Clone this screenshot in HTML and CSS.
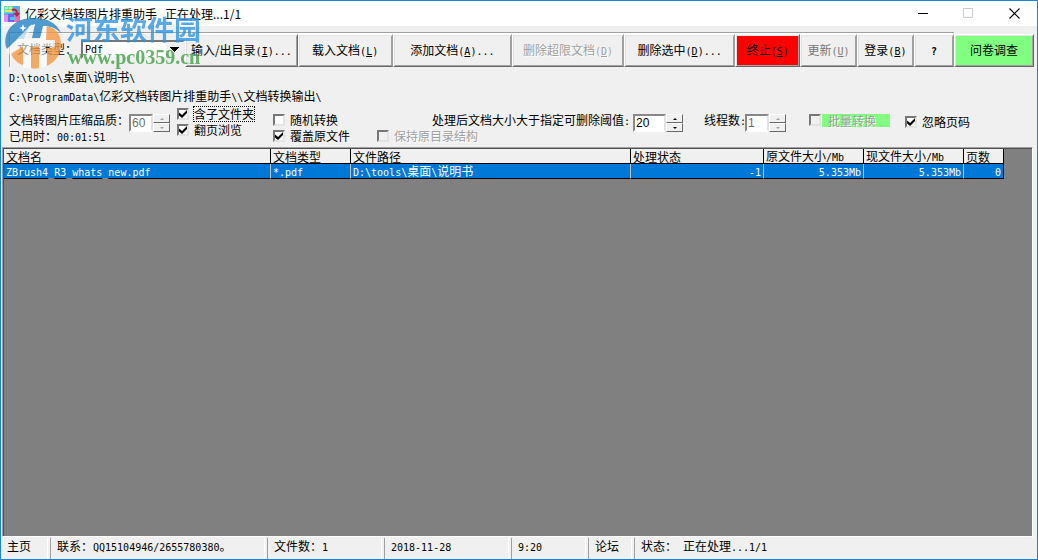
FILE: index.html
```html
<!DOCTYPE html>
<html lang="zh-CN">
<head>
<meta charset="utf-8">
<title>亿彩文档转图片排重助手</title>
<link rel="stylesheet" href="styles.css">
</head>
<body>
<div class="window">
  <header class="titlebar">
    <svg class="app-icon" width="16" height="16" viewBox="0 0 16 16" aria-hidden="true">
      <rect width="16" height="16" fill="#4fb4f5"/>
      <rect width="9" height="7" fill="#5fe0c0"/>
      <path d="M1 1h3v2H1zM5 1h3v2H5zM1 4h7v2H1z" fill="#f5e64a"/>
      <rect y="9" width="5" height="7" fill="#e58af5"/>
      <rect x="4" y="8" width="6" height="8" fill="#7b5cf0"/>
      <rect x="10" y="10" width="6" height="6" fill="#f56ab4"/>
      <rect x="6" y="11" width="5" height="3" fill="#37d0f0"/>
      <path d="M8 4q5-2 5 4" fill="none" stroke="#e01030" stroke-width="2"/>
      <path d="M9 7h7l-3 4z" fill="#e01030"/>
    </svg>
    <h1 class="title"><span>亿彩文档转图片排重助手</span><span>正在处理...1/1</span></h1>
    <div class="controls">
      <button type="button" aria-label="最小化"><svg width="11" height="11"><path d="M0 5.500h10" stroke="#000"/></svg></button>
      <button type="button" aria-label="最大化" disabled><svg width="11" height="11"><path d="M.5.500h9v9h-9z" fill="none" stroke="#ccc"/></svg></button>
      <button type="button" aria-label="关闭"><svg width="11" height="11"><path d="M.5.500l10 10M10.500.500l-10 10" stroke="#000" stroke-width="1.200"/></svg></button>
    </div>
  </header>

  <div class="toolbar">
    <div class="tool-group">
      <label class="type-label" for="type">文档类型：</label>
      <select class="type-select" id="type"><option>Pdf</option></select>
      <button type="button" class="tool w-dir">输入/出目录<span class="latin">(<u>I</u>)...</span></button>
      <button type="button" class="tool w-load">载入文档<span class="latin">(<u>L</u>)</span></button>
      <button type="button" class="tool w-add">添加文档<span class="latin">(<u>A</u>)...</span></button>
      <button type="button" class="tool w-del" disabled>删除超限文档<span class="latin">(<u>D</u>)</span></button>
      <button type="button" class="tool w-del">删除选中<span class="latin">(<u>D</u>)...</span></button>
      <button type="button" class="tool w-stop stop">终止<span class="latin">(<u>S</u>)</span></button>
      <button type="button" class="tool w-small update">更新<span class="latin">(<u>U</u>)</span></button>
      <button type="button" class="tool w-small">登录<span class="latin">(<u>B</u>)</span></button>
      <button type="button" class="tool w-help"><b class="latin">?</b></button>
    </div>
    <button type="button" class="tool survey">问卷调查</button>
  </div>

  <div class="paths">
    <p><span class="latin">D:\tools\</span>桌面<span class="latin">\</span>说明书<span class="latin">\</span></p>
    <p><span class="latin">C:\ProgramData\</span>亿彩文档转图片排重助手<span class="latin">\\</span>文档转换输出<span class="latin">\</span></p>
  </div>

  <div class="options">
    <div class="stack quality">
      <label for="quality">文档转图片压缩品质：</label>
      <span>已用时：<span class="latin">00:01:51</span></span>
    </div>
    <span class="spinner off"><input id="quality" type="text" value="60" disabled><span class="arrows"><button type="button" aria-label="增加品质" disabled></button><button type="button" aria-label="减少品质" disabled></button></span></span>
    <div class="stack browse">
      <label class="check"><input type="checkbox" checked><span class="focused">含子文件夹</span></label>
      <label class="check"><input type="checkbox" checked><span>翻页浏览</span></label>
    </div>
    <div class="stack convert">
      <label class="check"><input type="checkbox"><span>随机转换</span></label>
      <div class="pair">
        <label class="check"><input type="checkbox" checked><span>覆盖原文件</span></label>
        <label class="check off"><input type="checkbox" disabled><span>保持原目录结构</span></label>
      </div>
    </div>
    <div class="field limit">
      <label for="limit">处理后文档大小大于指定可删除阈值<span class="latin">:</span></label>
      <span class="spinner"><input id="limit" type="text" value="20"><span class="arrows"><button type="button" aria-label="增加阈值"></button><button type="button" aria-label="减少阈值"></button></span></span>
    </div>
    <div class="field threads">
      <label for="threads">线程数<span class="latin">:</span></label>
      <span class="spinner off"><input id="threads" type="text" value="1" disabled><span class="arrows"><button type="button" aria-label="增加线程" disabled></button><button type="button" aria-label="减少线程" disabled></button></span></span>
    </div>
    <label class="check off batch"><input type="checkbox" disabled><span>批量转换</span></label>
    <label class="check ignore"><input type="checkbox" checked><span>忽略页码</span></label>
  </div>

  <main class="list">
    <table>
      <colgroup><col class="c-name"><col class="c-type"><col class="c-path"><col class="c-state"><col class="c-size"><col class="c-size"><col class="c-pages"></colgroup>
      <thead><tr><th>文档名</th><th>文档类型</th><th>文件路径</th><th>处理状态</th><th>原文件大小<span class="latin">/Mb</span></th><th>现文件大小<span class="latin">/Mb</span></th><th>页数</th></tr></thead>
      <tbody><tr>
        <td><span class="latin">ZBrush4_R3_whats_new.pdf</span></td>
        <td><span class="latin">*.pdf</span></td>
        <td><span class="latin">D:\tools\</span>桌面<span class="latin">\</span>说明书</td>
        <td class="num"><span class="latin">-1</span></td>
        <td class="num"><span class="latin">5.353Mb</span></td>
        <td class="num"><span class="latin">5.353Mb</span></td>
        <td class="num"><span class="latin">0</span></td>
      </tr></tbody>
    </table>
  </main>

  <footer class="status">
    <span class="s-home">主页</span>
    <span class="s-contact">联系：<span class="latin">QQ15104946/2655780380</span>。</span>
    <span class="s-count">文件数：<span class="latin">1</span></span>
    <span class="s-date"><span class="latin">2018-11-28</span></span>
    <span class="s-time"><span class="latin">9:20</span></span>
    <span class="s-forum">论坛</span>
    <span class="s-state">状态：&ensp;正在处理<span class="latin">...1/1</span></span>
  </footer>

  <svg class="watermark" width="206" height="72" viewBox="0 0 206 72">
    <path d="M5 47C1 29 14 17 33 17c13 0 23 5 27 15-6-6-12-7-18-7l-3 12h-8l3-14C20 28 10 36 5 47z" fill="#2583c5"/>
    <path d="M8 30C13 21 22 17 31 18l-8 20h-6L6 48C4 42 5 35 8 30z" fill="#2583c5"/>
    <path d="M45 25c9 1 15 8 15 18 0 11-6 18-14 22V47h5l1-8h-7z" fill="#f29a45"/>
    <path d="M30 46h8v21c-3 1-6 1-8 0zM10 52l12-7v19c-6-2-10-6-12-12z" fill="#f29a45"/>
    <path d="M5 49L31 23l-5 15h13l4-13h3l-1 14h9v7h-9v20h-7V46h-8v21h-8V45l-13 9z" fill="#fff" opacity=".7"/>
    <path d="M22 23l1 3 3 1-3 1-1 3-1-3-3-1 3-1z" fill="#fff"/>
    <text class="mark-name" x="65" y="39">河东软件园</text>
    <text class="mark-url" x="67" y="63">www.pc0359.cn</text>
  </svg>
</div>
</body>
</html>
```

FILE: styles.css
```css
* { box-sizing: border-box; }
body {
  margin: 0;
  font: 12px/16px "Noto Sans CJK SC", sans-serif;
  color: #000;
}
button, input, select { font: inherit; color: inherit; margin: 0; padding: 0; border-radius: 0; }
p, h1 { margin: 0; }
.latin { font-family: "DejaVu Sans Mono", monospace; font-size: 10px; line-height: 10px; }
.window {
  position: relative;
  display: flex;
  flex-direction: column;
  min-height: 100vh;
  border: 1px solid #1883d7;
  background: #f0f0f0;
  white-space: nowrap;
}

.titlebar { display: flex; align-items: center; height: 25px; padding-left: 3px; background: #fff; }
.title { display: flex; gap: 8px; flex: 1; margin-left: 5px; font: 12px/16px "Noto Sans CJK SC", sans-serif; }
.controls { display: flex; }
.controls button { display: grid; place-items: center; width: 45px; height: 24px; border: 0; background: none; }
.controls button:last-child { width: 46px; }

.toolbar { display: flex; margin: 6px 3px 0 8px; }
.tool-group {
  display: flex;
  flex: 1;
  align-items: stretch;
  border-top: 1px solid #a0a0a0;
  border-left: 1px solid #a0a0a0;
  box-shadow: inset 1px 1px #fff;
  padding-top: 1px;
}
.type-label { align-self: center; width: 71px; padding: 0 0 4px 7px; }
.type-select {
  align-self: center;
  appearance: none;
  width: 104px;
  height: 19px;
  margin-bottom: 2px;
  padding-left: 2px;
  border: 2px solid;
  border-color: #777 #eee #eee #777;
  font: 10px/14px "DejaVu Sans Mono", monospace;
  background:
    linear-gradient(#000, #000) right 4px top 5px / 9px 1px no-repeat,
    linear-gradient(#000, #000) right 5px top 6px / 7px 1px no-repeat,
    linear-gradient(#000, #000) right 6px top 7px / 5px 1px no-repeat,
    linear-gradient(#000, #000) right 7px top 8px / 3px 1px no-repeat,
    linear-gradient(#000, #000) right 8px top 9px / 1px 1px no-repeat,
    linear-gradient(#f0f0f0, #f0f0f0) right / 17px 100% no-repeat,
    #fff;
}
.tool {
  height: 33px;
  padding-bottom: 2px;
  border: 1px solid;
  border-color: #fff #a0a0a0 #696969 #fff;
  box-shadow: inset 1px 1px #e3e3e3, inset -1px -1px #a0a0a0;
  background: #f0f0f0;
}
.w-dir { flex: 113 1 0; border-right-color: #696969; }
.w-load { flex: 95 1 0; }
.w-add { flex: 120 1 0; }
.w-del { flex: 112 1 0; }
.w-stop { flex: 64 1 0; }
.w-small { flex: 56 1 0; }
.w-help { flex: 39 1 0; }
.tool:disabled { color: #a0a0a0; text-shadow: 1px 1px #fff; }
.tool.stop { background: #f00; border-right-color: #696969; }
.update { color: #787878; }
.tool.survey { width: 80px; margin-top: 2px; background: #80ff80; border-right-color: #696969; }

.paths { display: grid; gap: 3px; padding: 2px 8px 0; }
.paths p { height: 16px; }

.options { display: flex; height: 43px; padding-left: 8px; align-items: flex-start; }
.stack { display: flex; flex-direction: column; }
.quality { width: 120px; padding-top: 8px; }
.spinner { display: flex; height: 18px; margin-top: 10px; }
.spinner input {
  width: 24px;
  height: 18px;
  padding-left: 1px;
  border: 2px solid;
  border-color: #888 #e3e3e3 #fff #888;
  background: #fff;
  font: 12px/14px "Liberation Sans", sans-serif;
}
.spinner.off input { background: #fff; color: #6d6d6d; }
.arrows { display: grid; grid-template-rows: 1fr 1fr; width: 17px; }
.arrows button {
  display: grid;
  place-items: center;
  border: 1px solid;
  border-color: #fff #696969 #696969 #fff;
  background: #f0f0f0;
}
.arrows button::before { content: ""; border: solid transparent; border-width: 0 2px 2px; border-bottom-color: #000; }
.arrows button:last-child::before { border-width: 2px 2px 0; border-top-color: #000; }
.arrows button:disabled::before { border-bottom-color: #a0a0a0; border-top-color: #a0a0a0; }
.limit .spinner input { width: 33px; }
.check { display: flex; align-items: center; gap: 5px; height: 16px; }
.check input {
  appearance: none;
  width: 12px;
  height: 12px;
  border: 2px solid;
  border-color: #777 #e3e3e3 #e3e3e3 #777;
  background: #fff;
}
.check input:checked::before {
  content: "";
  display: block;
  width: 8px;
  height: 8px;
  background: #000;
  clip-path: polygon(0 30%, 38% 62%, 100% 0, 100% 38%, 38% 100%, 0 68%);
}
.check.off { color: #a0a0a0; text-shadow: 1px 1px #fff; }
.check.off input { background: #f0f0f0; }
.focused { outline: 1px dotted #000; line-height: 14px; }
.browse { margin-left: 7px; padding-top: 2px; width: 96px; }
.convert { padding-top: 8px; }
.pair { display: flex; gap: 27px; }
.field { display: flex; }
.field label { padding-top: 8px; }
.limit { margin-left: -46px; }
.limit .spinner { margin-left: 3px; }
.threads { margin-left: 21px; }
.threads label { width: 41px; }
.batch { margin: 8px 0 0 23px; gap: 1px; }
.batch span { background: #80ff80; height: 13px; line-height: 13px; width: 68px; padding-right: 8px; text-align: center; }
.ignore { margin: 10px 0 0 15px; }

.list {
  flex: 1;
  margin: 0 4px 0 1px;
  border: 1px solid;
  border-color: #a0a0a0 #fff #fff #a0a0a0;
  box-shadow: inset 1px 1px #505050;
  padding: 1px 0 0 1px;
  background: #808080;
}
table { table-layout: fixed; width: 1000px; border-collapse: separate; border-spacing: 0; }
.c-name { width: 267px; }
.c-type { width: 80px; }
.c-path { width: 280px; }
.c-state { width: 133px; }
.c-size { width: 100px; }
.c-pages { width: 40px; }
th, td { height: 15px; padding: 0 2px; line-height: 14px; font-weight: 400; text-align: left; border-right: 1px solid #c0c0c0; border-bottom: 1px solid #000; }
th { line-height: 13px; background: #f0f0f0; border-right-color: #000; }
td { background: #0078d7; color: #fff; }
td:last-child { border-right-color: #000; }
.num { text-align: right; }

.status { display: flex; height: 22px; padding-top: 1px; }
.status > span { padding: 0 0 0 6px; border-left: 1px solid #a0a0a0; border-right: 1px solid #fff; margin-right: 2px; }
.status .s-home { width: 47px; border-left: 0; }
.status .s-contact { width: 215px; }
.status .s-count { width: 115px; }
.status .s-date { width: 125px; }
.status .s-time { width: 75px; }
.status .s-forum { width: 44px; }
.status .s-state { flex: 1; border-right: 0; }

.watermark { position: absolute; left: 0; top: 0; pointer-events: none; opacity: .8; }
.mark-name { font: 700 27px "Noto Sans CJK SC", sans-serif; fill: #2f94e6; }
.mark-url { font: 700 20px "Liberation Serif", serif; fill: #43a047; }
```
